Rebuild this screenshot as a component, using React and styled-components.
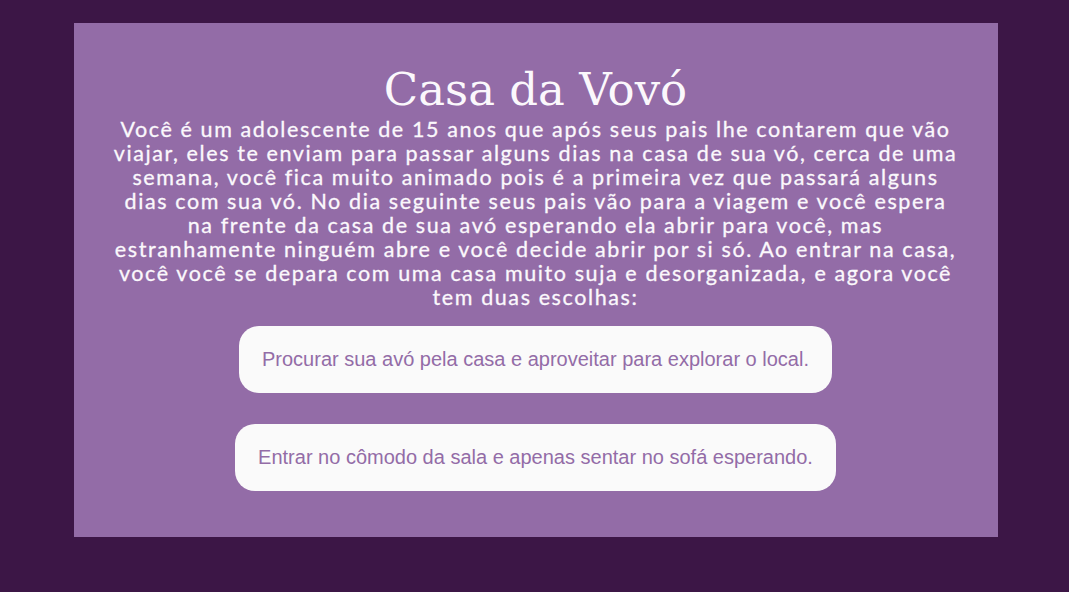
import styled, { createGlobalStyle } from "styled-components";

const GlobalStyle = createGlobalStyle`
    body {
        margin:0;
        background:#3c1646;
        font-family:"Liberation Sans", Arial, sans-serif;
    }
`;

const Page = styled.div`
    min-height:592px;
    padding:23px 0 0 2px;
    box-sizing:border-box;
`;

const Card = styled.main`
    width:924px;
    height:514px;
    margin:0 auto;
    background:#936ca7;
    padding:44px 0 0;
    box-sizing:border-box;
    display:flex;
    flex-direction:column;
    align-items:center;
`;

const Title = styled.h1`
    margin:0;
    color:#fbf8fc;
    font-family:"DejaVu Serif", "Liberation Serif", serif;
    font-weight:400;
    font-size:45px;
    line-height:45px;
`;

const Story = styled.p`
    margin:5px 0 0;
    color:#fbf8fc;
    font-family:"Lato", "Noto Sans", sans-serif;
    font-weight:400;
    font-size:21.5px;
    line-height:24px;
    letter-spacing:1.6px;
    text-align:center;
    white-space:nowrap;
    -webkit-text-stroke:0.3px #fbf8fc;
`;

const Choices = styled.div`
    margin-top:17px;
    display:flex;
    flex-direction:column;
    align-items:center;
    gap:31px;
`;

const Choice = styled.button`
    border:none;
    background:#fafafa;
    color:#936ca7;
    font-family:"Liberation Sans", Arial, sans-serif;
    font-size:20px;
    line-height:23px;
    padding:22px 23px;
    border-radius:20px;
    cursor:pointer;
`;

const storyLines = [
    "Você é um adolescente de 15 anos que após seus pais lhe contarem que vão",
    "viajar, eles te enviam para passar alguns dias na casa de sua vó, cerca de uma",
    "semana, você fica muito animado pois é a primeira vez que passará alguns",
    "dias com sua vó. No dia seguinte seus pais vão para a viagem e você espera",
    "na frente da casa de sua avó esperando ela abrir para você, mas",
    "estranhamente ninguém abre e você decide abrir por si só. Ao entrar na casa,",
    "você você se depara com uma casa muito suja e desorganizada, e agora você",
    "tem duas escolhas:",
];

function App() {
    return (
        <Page>
            <GlobalStyle />
            <Card>
                <Title>Casa da Vovó</Title>
                <Story>
                    {storyLines.map((line, i) => (
                        <span key={i}>
                            {line}
                            {i < storyLines.length - 1 && <br />}
                        </span>
                    ))}
                </Story>
                <Choices>
                    <Choice>Procurar sua avó pela casa e aproveitar para explorar o local.</Choice>
                    <Choice>Entrar no cômodo da sala e apenas sentar no sofá esperando.</Choice>
                </Choices>
            </Card>
        </Page>
    );
}

export default App;
